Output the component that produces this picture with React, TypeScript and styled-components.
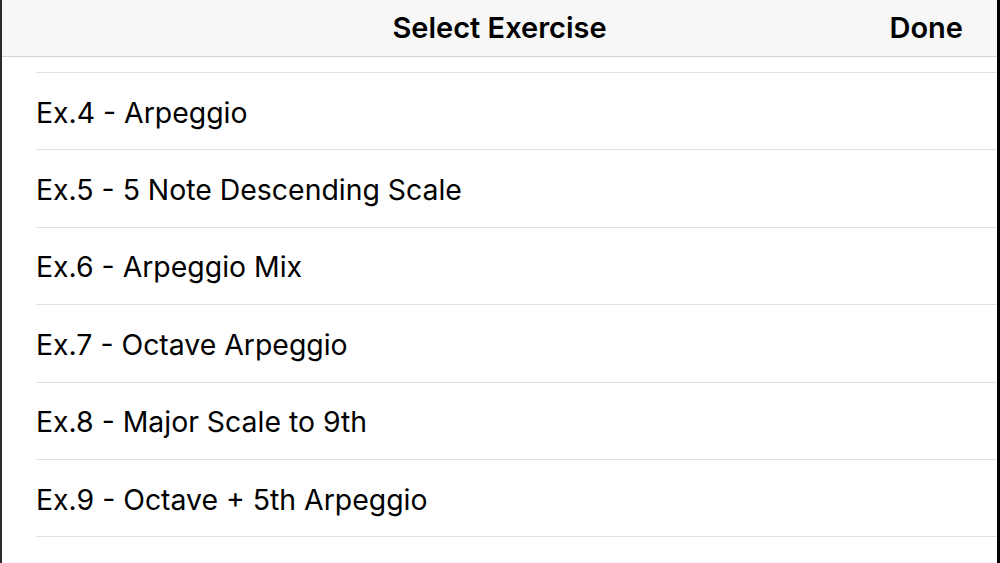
import React from 'react';
import styled, { createGlobalStyle } from 'styled-components';

const Global = createGlobalStyle`
	html, body {
		margin: 0;
		padding: 0;
		background: #fff;
		font-family: Inter, "Liberation Sans", sans-serif;
	}
`;

const Screen = styled.div`
	width: 1000px;
	height: 563px;
	box-sizing: border-box;
	border-left: 2px solid #2a2a2a;
	border-right: 3px solid #000;
	background: #fff;
	display: flex;
	flex-direction: column;
	overflow: hidden;
`;

const NavBar = styled.div`
	height: 56px;
	flex-shrink: 0;
	background: #f7f7f7;
	border-bottom: 1px solid #d4d4d4;
	display: grid;
	grid-template-columns: 1fr auto 1fr;
	align-items: center;
	padding: 0 34px;
`;

const Title = styled.div`
	grid-column: 2;
	font-size: 29px;
	font-weight: 600;
	color: #000;
	margin-bottom: 2px;
`;

const DoneButton = styled.button`
	grid-column: 3;
	justify-self: end;
	background: none;
	border: none;
	padding: 0;
	margin-bottom: 2px;
	font-family: inherit;
	font-size: 29px;
	font-weight: 600;
	color: #000;
	cursor: pointer;
`;

const List = styled.div`
	flex: 1;
	display: flex;
	flex-direction: column;
	padding-left: 34px;
`;

const Peek = styled.div`
	height: 16px;
	flex-shrink: 0;
	box-sizing: border-box;
	border-bottom: 1px solid #e0e0e0;
`;

const Row = styled.div`
	height: 77.4px;
	flex-shrink: 0;
	display: flex;
	align-items: center;
	padding-top: 2px;
	box-sizing: border-box;
	border-bottom: 1px solid #e0e0e0;
	font-size: 28.4px;
	color: #000;
`;

const exercises = [
	'Ex.4 - Arpeggio',
	'Ex.5 - 5 Note Descending Scale',
	'Ex.6 - Arpeggio Mix',
	'Ex.7 - Octave Arpeggio',
	'Ex.8 - Major Scale to 9th',
	'Ex.9 - Octave + 5th Arpeggio',
];

export default function App() {
	return (
		<>
			<Global />
			<Screen>
				<NavBar>
					<Title>Select Exercise</Title>
					<DoneButton>Done</DoneButton>
				</NavBar>
				<List>
					<Peek />
					{exercises.map((name) => (
						<Row key={name}>{name}</Row>
					))}
				</List>
			</Screen>
		</>
	);
}
